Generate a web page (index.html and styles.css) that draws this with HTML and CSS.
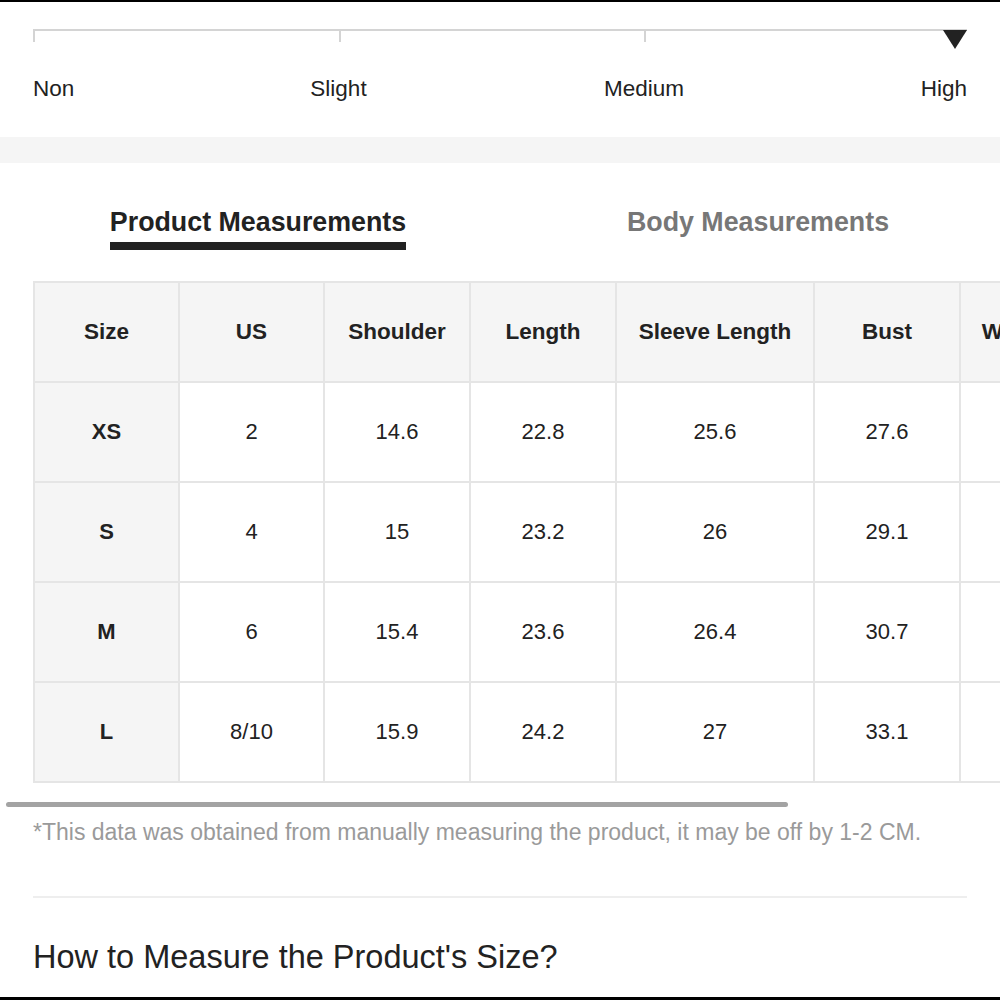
FILE: index.html
```html
<!DOCTYPE html>
<html lang="en">
<head>
<meta charset="utf-8">
<title>Size Guide</title>
<link rel="stylesheet" href="styles.css">
</head>
<body>
<div class="screen">
  <section class="stretch">
    <div class="track">
      <span class="tick"></span>
      <span class="tick"></span>
      <span class="tick"></span>
      <span></span>
      <span class="marker"></span>
    </div>
    <div class="labels">
      <span class="lab-start">Non</span>
      <span class="lab-mid">Slight</span>
      <span class="lab-mid">Medium</span>
      <span class="lab-end">High</span>
    </div>
  </section>
  <div class="band"></div>
  <section class="measure">
    <div class="tabs">
      <div class="tab active"><span>Product Measurements</span></div>
      <div class="tab"><span>Body Measurements</span></div>
    </div>
    <div class="table-scroll">
      <div class="size-table">
        <div class="cell head">Size</div>
        <div class="cell head">US</div>
        <div class="cell head">Shoulder</div>
        <div class="cell head">Length</div>
        <div class="cell head">Sleeve Length</div>
        <div class="cell head">Bust</div>
        <div class="cell head">Waist Size</div>

        <div class="cell size">XS</div>
        <div class="cell">2</div>
        <div class="cell">14.6</div>
        <div class="cell">22.8</div>
        <div class="cell">25.6</div>
        <div class="cell">27.6</div>
        <div class="cell">24.4</div>

        <div class="cell size">S</div>
        <div class="cell">4</div>
        <div class="cell">15</div>
        <div class="cell">23.2</div>
        <div class="cell">26</div>
        <div class="cell">29.1</div>
        <div class="cell">26</div>

        <div class="cell size">M</div>
        <div class="cell">6</div>
        <div class="cell">15.4</div>
        <div class="cell">23.6</div>
        <div class="cell">26.4</div>
        <div class="cell">30.7</div>
        <div class="cell">27.6</div>

        <div class="cell size">L</div>
        <div class="cell">8/10</div>
        <div class="cell">15.9</div>
        <div class="cell">24.2</div>
        <div class="cell">27</div>
        <div class="cell">33.1</div>
        <div class="cell">30</div>
      </div>
    </div>
    <div class="scroll-indicator"></div>
    <p class="note">*This data was obtained from manually measuring the product, it may be off by 1-2 CM.</p>
    <hr class="divider">
    <h2 class="how">How to Measure the Product's Size?</h2>
  </section>
</div>
</body>
</html>
```

FILE: styles.css
```css
html, body {
  margin: 0;
  padding: 0;
}

body {
  font-family: "Liberation Sans", Arial, Helvetica, sans-serif;
  color: #222;
  background: #fff;
  overflow: hidden;
}

.screen {
  width: 1000px;
  height: 1000px;
  box-sizing: border-box;
  border-top: 2px solid #000;
  border-bottom: 3px solid #000;
  overflow: hidden;
  background: #fff;
}

/* stretch scale */
.stretch {
  padding: 27px 33px 35px;
}

.track {
  position: relative;
  height: 13px;
  box-sizing: border-box;
  border-top: 2px solid #d4d4d4;
  display: grid;
  grid-template-columns: 305.5px 305.5px 305.5px 1fr;
}

.tick {
  border-left: 2px solid #d4d4d4;
}

.marker {
  position: absolute;
  right: 0;
  top: -1px;
  width: 0;
  height: 0;
  border-left: 12px solid transparent;
  border-right: 12px solid transparent;
  border-top: 19px solid #222;
}

.labels {
  margin-top: 34px;
  display: grid;
  grid-template-columns: 152.75px 305.5px 305.5px 1fr;
  font-size: 22.5px;
  line-height: 26px;
  color: #222;
}

.lab-start { text-align: left; }
.lab-mid { text-align: center; }
.lab-end { text-align: right; }

.band {
  height: 26px;
  background: #f5f5f5;
}

/* tabs */
.tabs {
  display: grid;
  grid-template-columns: 500px 500px;
  padding-left: 8px;
  padding-top: 43.4px;
}

.tab {
  text-align: center;
  font-size: 26.8px;
  font-weight: 700;
  line-height: 32px;
  color: #777;
}

.tab span {
  display: inline-block;
  padding-bottom: 3.6px;
  border-bottom: 8px solid transparent;
}

.tab.active {
  color: #222;
}

.tab.active span {
  border-bottom-color: #222;
}

/* table */
.table-scroll {
  margin-top: 31px;
  padding-left: 33px;
  overflow: hidden;
}

.size-table {
  display: grid;
  grid-template-columns: 145px 145px 146px 146px 198px 146px 154px;
  width: max-content;
  border-top: 2px solid #e5e5e5;
  border-left: 2px solid #e5e5e5;
}

.cell {
  height: 100px;
  box-sizing: border-box;
  border-right: 2px solid #e5e5e5;
  border-bottom: 2px solid #e5e5e5;
  display: flex;
  align-items: center;
  justify-content: center;
  font-size: 22px;
  color: #222;
  white-space: nowrap;
}

.cell.head {
  background: #f5f5f5;
  font-weight: 700;
  font-size: 22.5px;
}

.cell.size {
  background: #f5f5f5;
  font-weight: 700;
}

.scroll-indicator {
  margin: 19px 0 0 6px;
  width: 782px;
  height: 5px;
  border-radius: 3px;
  background: #a3a3a3;
}

.note {
  margin: 11px 33px 0;
  font-size: 23px;
  line-height: 28px;
  color: #9a9a9a;
  white-space: nowrap;
}

.divider {
  margin: 50px 33px 0;
  border: 0;
  height: 2px;
  background: #eee;
}

.how {
  margin: 40px 33px 0;
  font-size: 32.5px;
  font-weight: 400;
  line-height: 38px;
  color: #222;
}
```
